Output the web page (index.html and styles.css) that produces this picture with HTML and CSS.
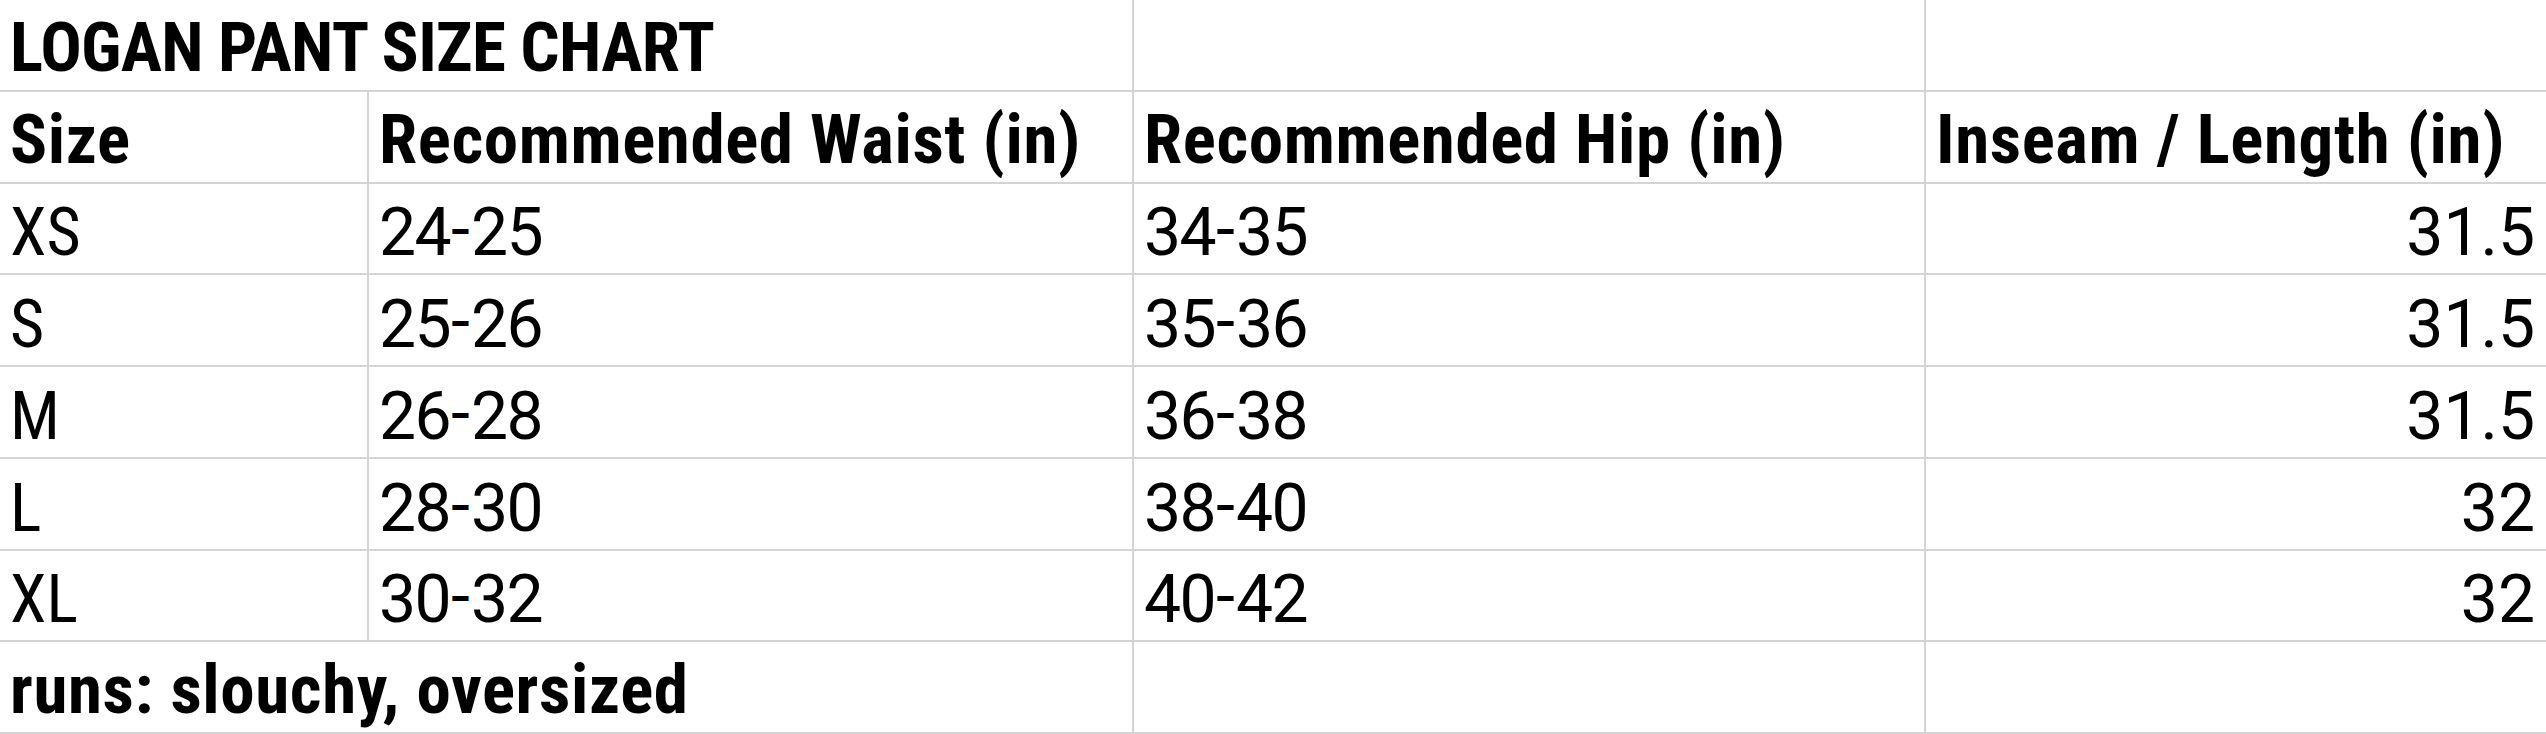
FILE: index.html
```html
<!DOCTYPE html>
<html lang="en">
<head>
<meta charset="utf-8">
<title>Logan Pant Size Chart</title>
<link rel="stylesheet" href="styles.css">
</head>
<body>
<div class="sheet">
  <div class="cell bold title span2">LOGAN PANT SIZE CHART</div>
  <div class="cell"></div>
  <div class="cell last"></div>

  <div class="cell bold">Size</div>
  <div class="cell bold">Recommended Waist (in)</div>
  <div class="cell bold">Recommended Hip (in)</div>
  <div class="cell bold last">Inseam / Length (in)</div>

  <div class="cell">XS</div>
  <div class="cell digits range">24<span class="dash">–</span>25</div>
  <div class="cell digits range">34<span class="dash">–</span>35</div>
  <div class="cell digits num last">31.5</div>

  <div class="cell">S</div>
  <div class="cell digits range">25<span class="dash">–</span>26</div>
  <div class="cell digits range">35<span class="dash">–</span>36</div>
  <div class="cell digits num last">31.5</div>

  <div class="cell">M</div>
  <div class="cell digits range">26<span class="dash">–</span>28</div>
  <div class="cell digits range">36<span class="dash">–</span>38</div>
  <div class="cell digits num last">31.5</div>

  <div class="cell">L</div>
  <div class="cell digits range">28<span class="dash">–</span>30</div>
  <div class="cell digits range">38<span class="dash">–</span>40</div>
  <div class="cell digits num last">32</div>

  <div class="cell">XL</div>
  <div class="cell digits range">30<span class="dash">–</span>32</div>
  <div class="cell digits range">40<span class="dash">–</span>42</div>
  <div class="cell digits num last">32</div>

  <div class="cell bold span2">runs: slouchy, oversized</div>
  <div class="cell"></div>
  <div class="cell last"></div>
</div>
</body>
</html>
```
FILE: styles.css
```css
html, body {
  margin: 0;
  padding: 0;
  background: #ffffff;
}

body {
  overflow: hidden;
  font-family: "Roboto", "Liberation Sans", sans-serif;
  color: #000000;
}

.sheet {
  display: grid;
  grid-template-columns: 369px 765px 792px 1fr;
  grid-auto-rows: 91.75px;
  width: 2546px;
}

.cell {
  display: flex;
  align-items: flex-end;
  box-sizing: border-box;
  padding: 0 10px 2px 10px;
  border-right: 2px solid #d4d4d4;
  border-bottom: 2px solid #d4d4d4;
  font-size: 66px;
  font-weight: 400;
  font-stretch: 87.5%;
  white-space: nowrap;
}

.span2 {
  grid-column: span 2;
}

.last {
  border-right: none;
}

.bold {
  font-size: 69px;
  font-weight: 700;
  letter-spacing: 0.6px;
  padding-bottom: 2px;
}

.title {
  letter-spacing: -0.7px;
}

.digits {
  font-stretch: 100%;
}

.range {
  letter-spacing: -1.5px;
}

.dash {
  display: inline-block;
  letter-spacing: 0;
  margin: 0 -11.25px;
  transform: scaleX(0.5);
}

.num {
  justify-content: flex-end;
  padding-right: 11px;
}
```
